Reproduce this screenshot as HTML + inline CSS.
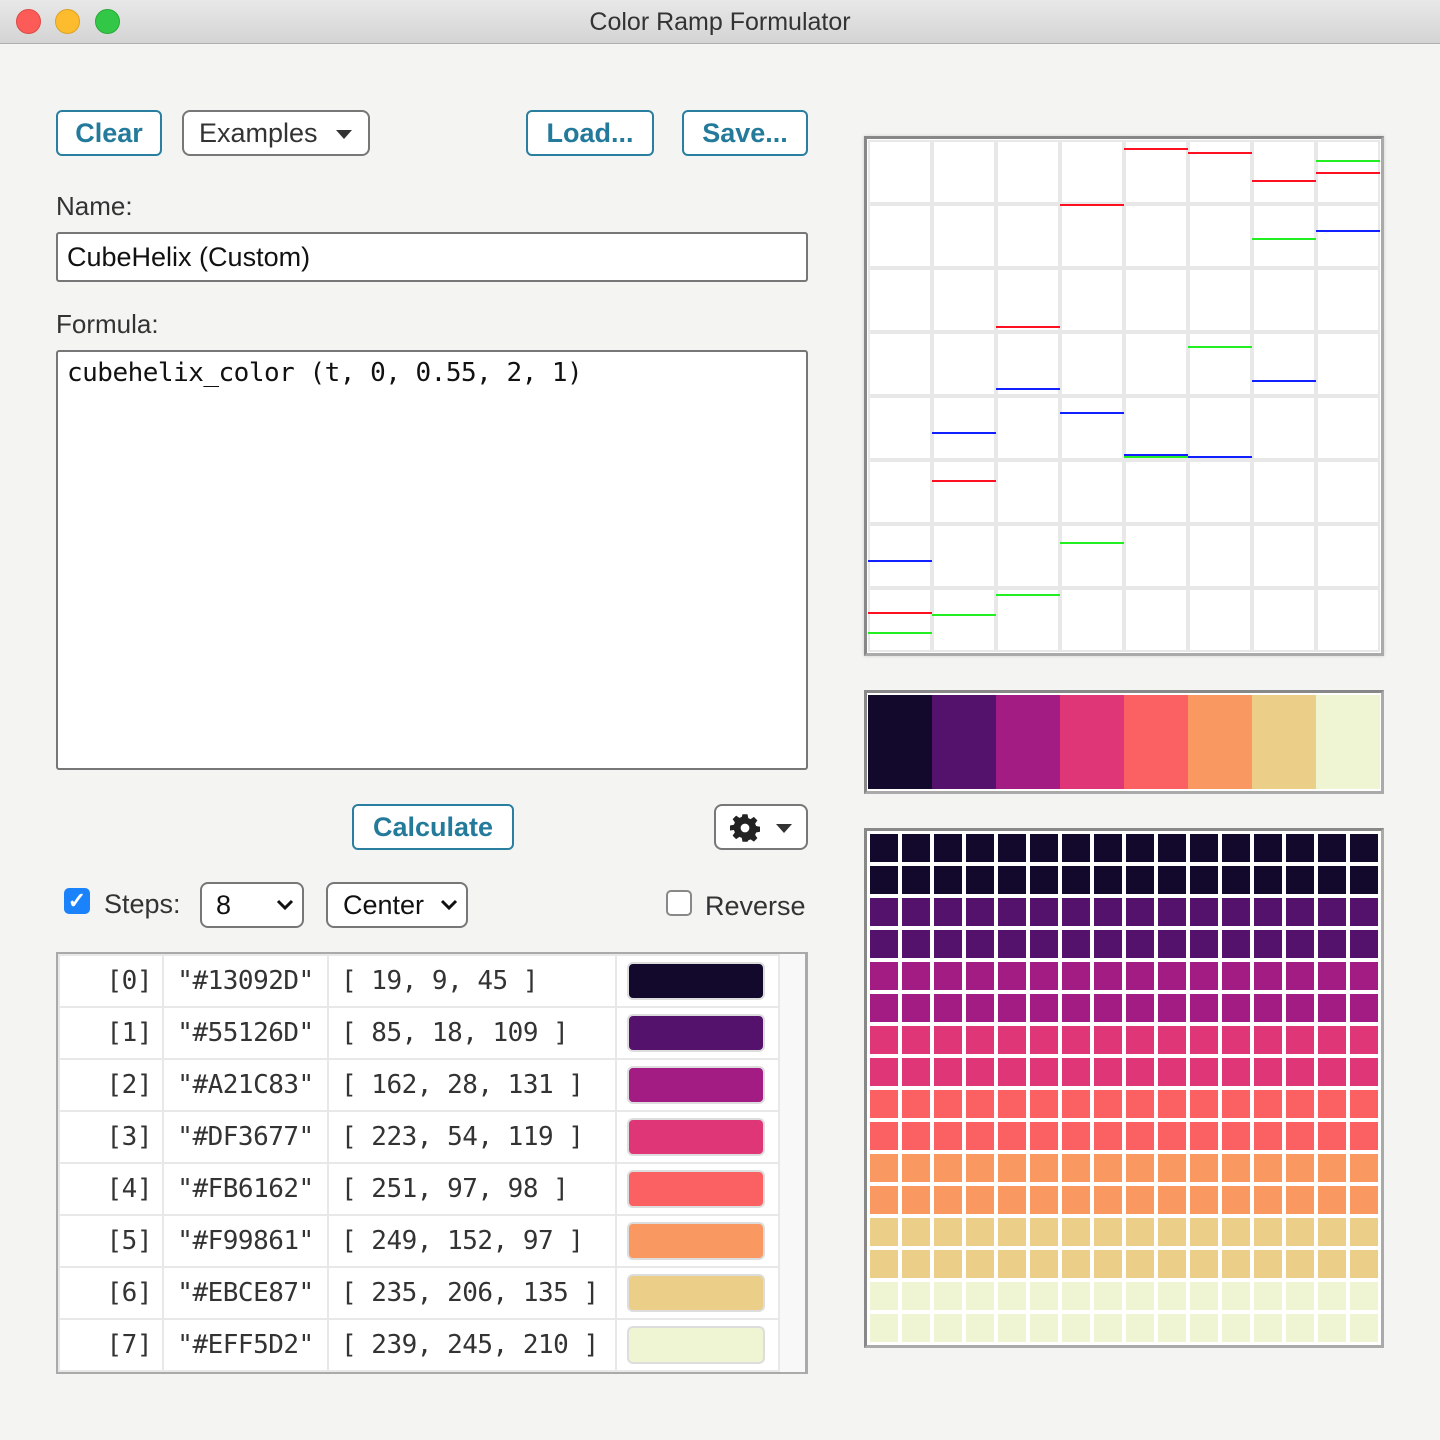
<!DOCTYPE html>
<html><head><style>
*{box-sizing:border-box;margin:0;padding:0}
body{width:1440px;height:1440px;background:#f4f4f2;font-family:"Liberation Sans",sans-serif;position:relative;overflow:hidden;color:#333}
.abs{position:absolute}
.title{left:0;top:0;width:1440px;height:44px;background:linear-gradient(#e8e8e8,#d4d4d4);border-bottom:1px solid #b0b0b0;text-align:center;font-size:25px;line-height:44px;color:#333}
.dot{width:25px;height:25px;border-radius:50%;top:9px}
.btn{border:2px solid #2a7fa0;border-radius:6px;background:#fff;color:#237a9b;font-weight:bold;font-size:27px;text-align:center;line-height:42px}
.gbtn{border:2px solid #777;border-radius:8px;background:#fff;color:#333;font-size:27px}
.lbl{font-size:26px;color:#333}
.inp{border:2px solid #777;background:#fff;border-radius:3px}
.mono{font-family:"DejaVu Sans Mono","Liberation Mono",monospace}
table{border-collapse:collapse}
td{border:2px solid #e8e8e8;height:52px;font-size:26px;color:#333;letter-spacing:-0.5px}
.sw{width:138px;height:38px;border:2px solid #ddd;border-radius:6px;margin-left:10px}
.row{position:absolute;left:870px;width:510px;height:28px}
</style></head><body>
<div class="abs title">Color Ramp Formulator</div>
<div class="abs dot" style="left:16px;background:#fc5b57;border:1px solid #de4a45"></div>
<div class="abs dot" style="left:55px;background:#fdbc2e;border:1px solid #dea123"></div>
<div class="abs dot" style="left:95px;background:#33c748;border:1px solid #27aa35"></div>

<div class="abs btn" style="left:56px;top:110px;width:106px;height:46px">Clear</div>
<div class="abs gbtn" style="left:182px;top:110px;width:188px;height:46px;line-height:42px;padding-left:15px">Examples <span style="position:absolute;left:152px;top:18px;border-left:8px solid transparent;border-right:8px solid transparent;border-top:9px solid #333"></span></div>
<div class="abs btn" style="left:526px;top:110px;width:128px;height:46px">Load...</div>
<div class="abs btn" style="left:682px;top:110px;width:126px;height:46px">Save...</div>

<div class="abs lbl" style="left:56px;top:191px">Name:</div>
<div class="abs inp" style="left:56px;top:232px;width:752px;height:50px;font-size:27px;color:#111;padding:8px 9px">CubeHelix (Custom)</div>
<div class="abs lbl" style="left:56px;top:309px">Formula:</div>
<div class="abs inp mono" style="left:56px;top:350px;width:752px;height:420px;font-size:26px;color:#111;padding:6px 9px;letter-spacing:-0.5px">cubehelix_color (t, 0, 0.55, 2, 1)</div>

<div class="abs btn" style="left:352px;top:804px;width:162px;height:46px">Calculate</div>
<div class="abs gbtn" style="left:714px;top:804px;width:94px;height:46px">
<svg class="abs" style="left:14px;top:7px" width="30" height="30" viewBox="0 0 24 24"><path fill="#222" d="M10 1h4l.6 3.1 1.9.8 2.6-1.8 2.8 2.8-1.8 2.6.8 1.9 3.1.6v4l-3.1.6-.8 1.9 1.8 2.6-2.8 2.8-2.6-1.8-1.9.8L14 23h-4l-.6-3.1-1.9-.8-2.6 1.8-2.8-2.8 1.8-2.6-.8-1.9L0 14v-4l3.1-.6.8-1.9-1.8-2.6 2.8-2.8 2.6 1.8 1.9-.8zM12 8.5a3.5 3.5 0 1 0 0 7 3.5 3.5 0 0 0 0-7z"/></svg>
<span style="position:absolute;left:60px;top:18px;border-left:8px solid transparent;border-right:8px solid transparent;border-top:9px solid #333"></span></div>

<div class="abs" style="left:64px;top:888px;width:26px;height:26px;background:#1a82fb;border-radius:5px;color:#fff;font-size:22px;text-align:center;line-height:26px;font-weight:bold">✓</div>
<div class="abs lbl" style="left:104px;top:889px;font-size:27px">Steps:</div>
<div class="abs gbtn" style="left:200px;top:882px;width:104px;height:46px;line-height:42px;padding-left:14px;color:#111">8<svg class="abs" style="left:74px;top:14px" width="18" height="14" viewBox="0 0 18 14"><path d="M2 3l7 7 7-7" stroke="#111" stroke-width="3" fill="none"/></svg></div>
<div class="abs gbtn" style="left:326px;top:882px;width:142px;height:46px;line-height:42px;padding-left:15px;color:#111">Center<svg class="abs" style="left:112px;top:14px" width="18" height="14" viewBox="0 0 18 14"><path d="M2 3l7 7 7-7" stroke="#111" stroke-width="3" fill="none"/></svg></div>
<div class="abs" style="left:666px;top:890px;width:26px;height:26px;border:2px solid #888;border-radius:5px;background:#fff"></div>
<div class="abs lbl" style="left:705px;top:891px;font-size:27px">Reverse</div>

<div class="abs" style="left:56px;top:952px;width:752px;height:422px;border:2px solid #aaa;border-right-width:3px;background:#f8f8f8;overflow:hidden">
<table class="mono" style="position:absolute;left:0;top:0;background:#fff;table-layout:fixed;width:720px">
<col style="width:104px"><col style="width:165px"><col style="width:288px"><col style="width:163px">
<tr><td style="text-align:right;padding-right:10px">[0]</td><td style="text-align:center">"#13092D"</td><td style="padding-left:12px">[ 19, 9, 45 ]</td><td><div class="sw" style="background:#13092D"></div></td></tr>
<tr><td style="text-align:right;padding-right:10px">[1]</td><td style="text-align:center">"#55126D"</td><td style="padding-left:12px">[ 85, 18, 109 ]</td><td><div class="sw" style="background:#55126D"></div></td></tr>
<tr><td style="text-align:right;padding-right:10px">[2]</td><td style="text-align:center">"#A21C83"</td><td style="padding-left:12px">[ 162, 28, 131 ]</td><td><div class="sw" style="background:#A21C83"></div></td></tr>
<tr><td style="text-align:right;padding-right:10px">[3]</td><td style="text-align:center">"#DF3677"</td><td style="padding-left:12px">[ 223, 54, 119 ]</td><td><div class="sw" style="background:#DF3677"></div></td></tr>
<tr><td style="text-align:right;padding-right:10px">[4]</td><td style="text-align:center">"#FB6162"</td><td style="padding-left:12px">[ 251, 97, 98 ]</td><td><div class="sw" style="background:#FB6162"></div></td></tr>
<tr><td style="text-align:right;padding-right:10px">[5]</td><td style="text-align:center">"#F99861"</td><td style="padding-left:12px">[ 249, 152, 97 ]</td><td><div class="sw" style="background:#F99861"></div></td></tr>
<tr><td style="text-align:right;padding-right:10px">[6]</td><td style="text-align:center">"#EBCE87"</td><td style="padding-left:12px">[ 235, 206, 135 ]</td><td><div class="sw" style="background:#EBCE87"></div></td></tr>
<tr><td style="text-align:right;padding-right:10px">[7]</td><td style="text-align:center">"#EFF5D2"</td><td style="padding-left:12px">[ 239, 245, 210 ]</td><td><div class="sw" style="background:#EFF5D2"></div></td></tr>
</table></div>

<div class="abs" style="left:864px;top:136px;width:520px;height:520px;border:3px solid #888;border-right-color:#aaa;border-bottom-color:#aaa;background:#fff;box-shadow:0 0 3px #ccc"></div>
<svg class="abs" style="left:868px;top:140px" width="512" height="512" viewBox="868 140 512 512">
<g stroke="#e8e8e8" stroke-width="4">
<path d="M868 140V652M932 140V652M996 140V652M1060 140V652M1124 140V652M1188 140V652M1252 140V652M1316 140V652M1380 140V652"/>
<path d="M868 140H1380M868 204H1380M868 268H1380M868 332H1380M868 396H1380M868 460H1380M868 524H1380M868 588H1380M868 652H1380"/>
</g>
<g stroke-width="2">
<path stroke="#ff1020" d="M868 613H932M932 481H996M996 327H1060M1060 205H1124M1124 149H1188M1188 153H1252M1252 181H1316M1316 173H1380"/>
<path stroke="#22ee22" d="M868 633H932M932 615H996M996 595H1060M1060 543H1124M1124 457H1188M1188 347H1252M1252 239H1316M1316 161H1380"/>
<path stroke="#1020ff" d="M868 561H932M932 433H996M996 389H1060M1060 413H1124M1124 455H1188M1188 457H1252M1252 381H1316M1316 231H1380"/>
</g></svg>

<div class="abs" style="left:864px;top:690px;width:520px;height:104px;border:3px solid #888;border-right-color:#aaa;border-bottom-color:#aaa;background:#fff;padding:2px 1px;display:flex">
<div style="flex:1;background:#13092D"></div><div style="flex:1;background:#55126D"></div><div style="flex:1;background:#A21C83"></div><div style="flex:1;background:#DF3677"></div><div style="flex:1;background:#FB6162"></div><div style="flex:1;background:#F99861"></div><div style="flex:1;background:#EBCE87"></div><div style="flex:1;background:#EFF5D2"></div></div>

<div class="abs" style="left:864px;top:828px;width:520px;height:520px;border:3px solid #888;border-right-color:#aaa;border-bottom-color:#aaa;background:#fff"></div>
<div class="row" style="top:834px;background:repeating-linear-gradient(90deg,#13092D 0 28px,#fff 28px 32px)"></div>
<div class="row" style="top:866px;background:repeating-linear-gradient(90deg,#13092D 0 28px,#fff 28px 32px)"></div>
<div class="row" style="top:898px;background:repeating-linear-gradient(90deg,#55126D 0 28px,#fff 28px 32px)"></div>
<div class="row" style="top:930px;background:repeating-linear-gradient(90deg,#55126D 0 28px,#fff 28px 32px)"></div>
<div class="row" style="top:962px;background:repeating-linear-gradient(90deg,#A21C83 0 28px,#fff 28px 32px)"></div>
<div class="row" style="top:994px;background:repeating-linear-gradient(90deg,#A21C83 0 28px,#fff 28px 32px)"></div>
<div class="row" style="top:1026px;background:repeating-linear-gradient(90deg,#DF3677 0 28px,#fff 28px 32px)"></div>
<div class="row" style="top:1058px;background:repeating-linear-gradient(90deg,#DF3677 0 28px,#fff 28px 32px)"></div>
<div class="row" style="top:1090px;background:repeating-linear-gradient(90deg,#FB6162 0 28px,#fff 28px 32px)"></div>
<div class="row" style="top:1122px;background:repeating-linear-gradient(90deg,#FB6162 0 28px,#fff 28px 32px)"></div>
<div class="row" style="top:1154px;background:repeating-linear-gradient(90deg,#F99861 0 28px,#fff 28px 32px)"></div>
<div class="row" style="top:1186px;background:repeating-linear-gradient(90deg,#F99861 0 28px,#fff 28px 32px)"></div>
<div class="row" style="top:1218px;background:repeating-linear-gradient(90deg,#EBCE87 0 28px,#fff 28px 32px)"></div>
<div class="row" style="top:1250px;background:repeating-linear-gradient(90deg,#EBCE87 0 28px,#fff 28px 32px)"></div>
<div class="row" style="top:1282px;background:repeating-linear-gradient(90deg,#EFF5D2 0 28px,#fff 28px 32px)"></div>
<div class="row" style="top:1314px;background:repeating-linear-gradient(90deg,#EFF5D2 0 28px,#fff 28px 32px)"></div>
</body></html>
